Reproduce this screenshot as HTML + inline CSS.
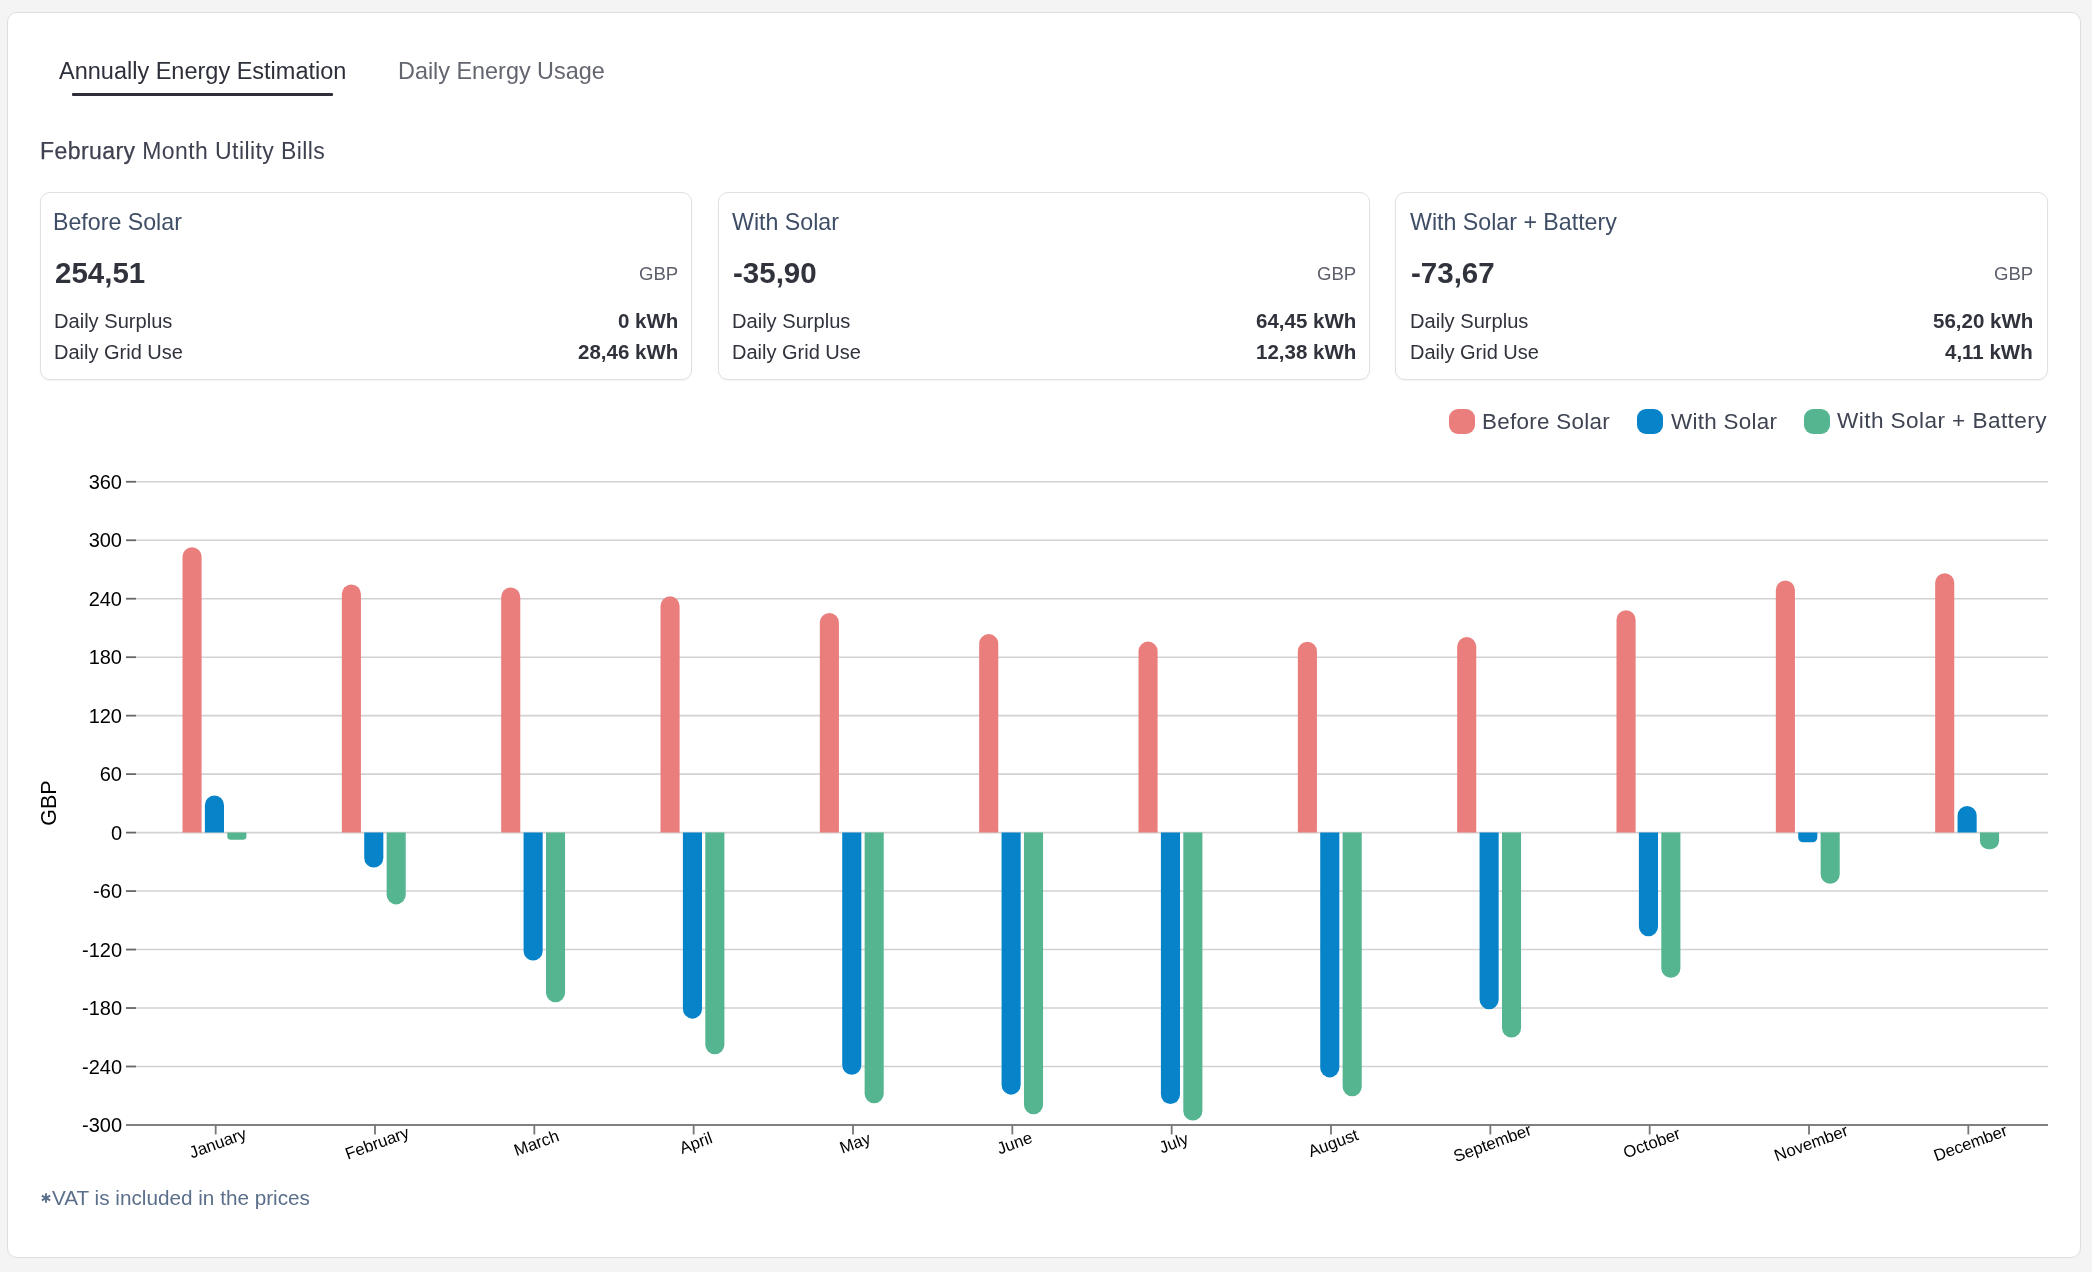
<!DOCTYPE html>
<html><head><meta charset="utf-8"><title>Energy Estimation</title>
<style>
html,body{margin:0;padding:0;}
body{width:2092px;height:1272px;overflow:hidden;background:#f4f4f4;font-family:"Liberation Sans",sans-serif;position:relative;}
.panel{position:absolute;left:7px;top:12px;width:2074px;height:1246px;box-sizing:border-box;border:1px solid #dcdee2;border-radius:10px;background:#fff;}
.t{position:absolute;white-space:nowrap;line-height:1;will-change:transform;}
.card{position:absolute;top:192px;width:652px;height:188px;box-sizing:border-box;border:1px solid #e0e1e4;border-radius:10px;background:#fff;box-shadow:0 1px 2px rgba(16,24,40,0.06);}
svg{position:absolute;left:0;top:0;will-change:transform;}
svg text{font-family:"Liberation Sans",sans-serif;}
</style></head><body>
<div class="panel"></div>
<div class="t" style="left:59.00px;top:59.81px;font-size:23.5px;color:#2d2f3a;">Annually Energy Estimation</div>
<div style="position:absolute;left:72px;top:93px;width:261px;height:3px;background:#2d2e3a;border-radius:1px"></div>
<div class="t" style="left:397.50px;top:59.89px;font-size:23.4px;color:#63656f;">Daily Energy Usage</div>
<div class="t" style="left:39.50px;top:139.53px;font-size:23px;color:#3e4250;letter-spacing:0.42px;"><span style="-webkit-text-stroke:0.25px #3e4250">February</span> Month Utility Bills</div>
<div class="card" style="left:40px;width:652px"></div>
<div class="t" style="left:53.00px;top:210.56px;font-size:23.2px;color:#3f4e66;">Before Solar</div>
<div class="t" style="left:54.50px;top:258.33px;font-size:29.5px;color:#30323c;font-weight:700;">254,51</div>
<div class="t" style="right:1413.80px;top:265.06px;font-size:18.6px;color:#5d606b;">GBP</div>
<div class="t" style="left:53.50px;top:311.29px;font-size:20.1px;color:#30323c;">Daily Surplus</div>
<div class="t" style="right:1414.00px;top:310.95px;font-size:20.5px;color:#30323c;font-weight:700;">0 kWh</div>
<div class="t" style="left:53.50px;top:342.27px;font-size:20px;color:#30323c;">Daily Grid Use</div>
<div class="t" style="right:1414.00px;top:341.85px;font-size:20.5px;color:#30323c;font-weight:700;">28,46 kWh</div>
<div class="card" style="left:718px;width:652px"></div>
<div class="t" style="left:731.80px;top:210.56px;font-size:23.2px;color:#3f4e66;">With Solar</div>
<div class="t" style="left:732.98px;top:258.33px;font-size:29.5px;color:#30323c;font-weight:700;">-35,90</div>
<div class="t" style="right:735.80px;top:265.06px;font-size:18.6px;color:#5d606b;">GBP</div>
<div class="t" style="left:731.98px;top:311.29px;font-size:20.1px;color:#30323c;">Daily Surplus</div>
<div class="t" style="right:736.00px;top:310.95px;font-size:20.5px;color:#30323c;font-weight:700;">64,45 kWh</div>
<div class="t" style="left:731.98px;top:342.27px;font-size:20px;color:#30323c;">Daily Grid Use</div>
<div class="t" style="right:736.00px;top:341.85px;font-size:20.5px;color:#30323c;font-weight:700;">12,38 kWh</div>
<div class="card" style="left:1395px;width:653px"></div>
<div class="t" style="left:1409.80px;top:210.56px;font-size:23.2px;color:#3f4e66;">With Solar + Battery</div>
<div class="t" style="left:1410.58px;top:258.33px;font-size:29.5px;color:#30323c;font-weight:700;">-73,67</div>
<div class="t" style="right:58.80px;top:265.06px;font-size:18.6px;color:#5d606b;">GBP</div>
<div class="t" style="left:1409.58px;top:311.29px;font-size:20.1px;color:#30323c;">Daily Surplus</div>
<div class="t" style="right:59.00px;top:310.95px;font-size:20.5px;color:#30323c;font-weight:700;">56,20 kWh</div>
<div class="t" style="left:1409.58px;top:342.27px;font-size:20px;color:#30323c;">Daily Grid Use</div>
<div class="t" style="right:59.00px;top:341.85px;font-size:20.5px;color:#30323c;font-weight:700;">4,11 kWh</div>
<div style="position:absolute;left:1449px;top:409px;width:26px;height:25px;border-radius:9px;background:#e97e7d"></div>
<div class="t" style="left:1482.00px;top:410.64px;font-size:22.4px;color:#3f4452;letter-spacing:0.3px;">Before Solar</div>
<div style="position:absolute;left:1637px;top:409px;width:26px;height:25px;border-radius:9px;background:#0683c9"></div>
<div class="t" style="left:1671.00px;top:410.64px;font-size:22.4px;color:#3f4452;letter-spacing:0.3px;">With Solar</div>
<div style="position:absolute;left:1804px;top:409px;width:26px;height:25px;border-radius:9px;background:#55b590"></div>
<div class="t" style="left:1836.50px;top:410.47px;font-size:22.6px;color:#3f4452;letter-spacing:0.42px;">With Solar + Battery</div>
<div class="t" style="left:51.50px;top:1187.65px;font-size:20.73px;color:#5b6f8b;">VAT is included in the prices</div>
<svg style="position:absolute;left:40px;top:1192px" width="12" height="12" viewBox="0 0 12 12"><g stroke="#5b6f8b" stroke-width="1.9" stroke-linecap="butt"><line x1="6" y1="1.2" x2="6" y2="10.8"/><line x1="1.85" y1="3.6" x2="10.15" y2="8.4"/><line x1="1.85" y1="8.4" x2="10.15" y2="3.6"/></g></svg>

<svg width="2092" height="1272" viewBox="0 0 2092 1272">
<line x1="136" x2="2048" y1="481.76" y2="481.76" stroke="#d2d2d2" stroke-width="1.6"/>
<line x1="136" x2="2048" y1="540.24" y2="540.24" stroke="#d2d2d2" stroke-width="1.6"/>
<line x1="136" x2="2048" y1="598.71" y2="598.71" stroke="#d2d2d2" stroke-width="1.6"/>
<line x1="136" x2="2048" y1="657.18" y2="657.18" stroke="#d2d2d2" stroke-width="1.6"/>
<line x1="136" x2="2048" y1="715.65" y2="715.65" stroke="#d2d2d2" stroke-width="1.6"/>
<line x1="136" x2="2048" y1="774.13" y2="774.13" stroke="#d2d2d2" stroke-width="1.6"/>
<line x1="136" x2="2048" y1="832.60" y2="832.60" stroke="#d2d2d2" stroke-width="1.6"/>
<line x1="136" x2="2048" y1="891.07" y2="891.07" stroke="#d2d2d2" stroke-width="1.6"/>
<line x1="136" x2="2048" y1="949.55" y2="949.55" stroke="#d2d2d2" stroke-width="1.6"/>
<line x1="136" x2="2048" y1="1008.02" y2="1008.02" stroke="#d2d2d2" stroke-width="1.6"/>
<line x1="136" x2="2048" y1="1066.49" y2="1066.49" stroke="#d2d2d2" stroke-width="1.6"/>
<line x1="126" x2="136" y1="481.76" y2="481.76" stroke="#666" stroke-width="1.8"/>
<text x="122" y="488.96" text-anchor="end" font-size="20" fill="#000">360</text>
<line x1="126" x2="136" y1="540.24" y2="540.24" stroke="#666" stroke-width="1.8"/>
<text x="122" y="547.44" text-anchor="end" font-size="20" fill="#000">300</text>
<line x1="126" x2="136" y1="598.71" y2="598.71" stroke="#666" stroke-width="1.8"/>
<text x="122" y="605.91" text-anchor="end" font-size="20" fill="#000">240</text>
<line x1="126" x2="136" y1="657.18" y2="657.18" stroke="#666" stroke-width="1.8"/>
<text x="122" y="664.38" text-anchor="end" font-size="20" fill="#000">180</text>
<line x1="126" x2="136" y1="715.65" y2="715.65" stroke="#666" stroke-width="1.8"/>
<text x="122" y="722.85" text-anchor="end" font-size="20" fill="#000">120</text>
<line x1="126" x2="136" y1="774.13" y2="774.13" stroke="#666" stroke-width="1.8"/>
<text x="122" y="781.33" text-anchor="end" font-size="20" fill="#000">60</text>
<line x1="126" x2="136" y1="832.60" y2="832.60" stroke="#666" stroke-width="1.8"/>
<text x="122" y="839.80" text-anchor="end" font-size="20" fill="#000">0</text>
<line x1="126" x2="136" y1="891.07" y2="891.07" stroke="#666" stroke-width="1.8"/>
<text x="122" y="898.27" text-anchor="end" font-size="20" fill="#000">-60</text>
<line x1="126" x2="136" y1="949.55" y2="949.55" stroke="#666" stroke-width="1.8"/>
<text x="122" y="956.75" text-anchor="end" font-size="20" fill="#000">-120</text>
<line x1="126" x2="136" y1="1008.02" y2="1008.02" stroke="#666" stroke-width="1.8"/>
<text x="122" y="1015.22" text-anchor="end" font-size="20" fill="#000">-180</text>
<line x1="126" x2="136" y1="1066.49" y2="1066.49" stroke="#666" stroke-width="1.8"/>
<text x="122" y="1073.69" text-anchor="end" font-size="20" fill="#000">-240</text>
<line x1="126" x2="136" y1="1124.97" y2="1124.97" stroke="#666" stroke-width="1.8"/>
<text x="122" y="1132.17" text-anchor="end" font-size="20" fill="#000">-300</text>
<line x1="126" x2="2048" y1="1124.97" y2="1124.97" stroke="#808080" stroke-width="2"/>
<line x1="215.67" x2="215.67" y1="1124.97" y2="1134.47" stroke="#777" stroke-width="1.8"/>
<text x="215.67" y="1137.17" dy="0.71em" text-anchor="middle" font-size="16.7" fill="#000" transform="rotate(-20 215.67 1137.17)">January</text>
<path d="M182.50,832.60 L182.50,556.70 A9.55,9.55 0 0 1 192.05,547.15 L192.05,547.15 A9.55,9.55 0 0 1 201.60,556.70 L201.60,832.60 Z" fill="#e97e7d"/>
<path d="M204.90,832.60 L204.90,805.02 A9.55,9.55 0 0 1 214.45,795.47 L214.45,795.47 A9.55,9.55 0 0 1 224.00,805.02 L224.00,832.60 Z" fill="#0683c9"/>
<path d="M227.30,832.60 L227.30,836.16 A3.56,3.56 0 0 0 230.86,839.71 L242.84,839.71 A3.56,3.56 0 0 0 246.40,836.16 L246.40,832.60 Z" fill="#55b590"/>
<line x1="375.00" x2="375.00" y1="1124.97" y2="1134.47" stroke="#777" stroke-width="1.8"/>
<text x="375.00" y="1137.17" dy="0.71em" text-anchor="middle" font-size="16.7" fill="#000" transform="rotate(-20 375.00 1137.17)">February</text>
<path d="M341.83,832.60 L341.83,594.12 A9.55,9.55 0 0 1 351.38,584.57 L351.38,584.57 A9.55,9.55 0 0 1 360.93,594.12 L360.93,832.60 Z" fill="#e97e7d"/>
<path d="M364.23,832.60 L364.23,858.04 A9.55,9.55 0 0 0 373.78,867.59 L373.78,867.59 A9.55,9.55 0 0 0 383.33,858.04 L383.33,832.60 Z" fill="#0683c9"/>
<path d="M386.63,832.60 L386.63,894.85 A9.55,9.55 0 0 0 396.18,904.40 L396.18,904.40 A9.55,9.55 0 0 0 405.73,894.85 L405.73,832.60 Z" fill="#55b590"/>
<line x1="534.33" x2="534.33" y1="1124.97" y2="1134.47" stroke="#777" stroke-width="1.8"/>
<text x="534.33" y="1137.17" dy="0.71em" text-anchor="middle" font-size="16.7" fill="#000" transform="rotate(-20 534.33 1137.17)">March</text>
<path d="M501.17,832.60 L501.17,597.05 A9.55,9.55 0 0 1 510.72,587.50 L510.72,587.50 A9.55,9.55 0 0 1 520.27,597.05 L520.27,832.60 Z" fill="#e97e7d"/>
<path d="M523.57,832.60 L523.57,950.91 A9.55,9.55 0 0 0 533.12,960.46 L533.12,960.46 A9.55,9.55 0 0 0 542.67,950.91 L542.67,832.60 Z" fill="#0683c9"/>
<path d="M545.97,832.60 L545.97,992.82 A9.55,9.55 0 0 0 555.52,1002.37 L555.52,1002.37 A9.55,9.55 0 0 0 565.07,992.82 L565.07,832.60 Z" fill="#55b590"/>
<line x1="693.67" x2="693.67" y1="1124.97" y2="1134.47" stroke="#777" stroke-width="1.8"/>
<text x="693.67" y="1137.17" dy="0.71em" text-anchor="middle" font-size="16.7" fill="#000" transform="rotate(-20 693.67 1137.17)">April</text>
<path d="M660.50,832.60 L660.50,605.92 A9.55,9.55 0 0 1 670.05,596.37 L670.05,596.37 A9.55,9.55 0 0 1 679.60,605.92 L679.60,832.60 Z" fill="#e97e7d"/>
<path d="M682.90,832.60 L682.90,1009.09 A9.55,9.55 0 0 0 692.45,1018.64 L692.45,1018.64 A9.55,9.55 0 0 0 702.00,1009.09 L702.00,832.60 Z" fill="#0683c9"/>
<path d="M705.30,832.60 L705.30,1044.66 A9.55,9.55 0 0 0 714.85,1054.21 L714.85,1054.21 A9.55,9.55 0 0 0 724.40,1044.66 L724.40,832.60 Z" fill="#55b590"/>
<line x1="853.00" x2="853.00" y1="1124.97" y2="1134.47" stroke="#777" stroke-width="1.8"/>
<text x="853.00" y="1137.17" dy="0.71em" text-anchor="middle" font-size="16.7" fill="#000" transform="rotate(-20 853.00 1137.17)">May</text>
<path d="M819.83,832.60 L819.83,622.49 A9.55,9.55 0 0 1 829.38,612.94 L829.38,612.94 A9.55,9.55 0 0 1 838.93,622.49 L838.93,832.60 Z" fill="#e97e7d"/>
<path d="M842.23,832.60 L842.23,1065.23 A9.55,9.55 0 0 0 851.78,1074.78 L851.78,1074.78 A9.55,9.55 0 0 0 861.33,1065.23 L861.33,832.60 Z" fill="#0683c9"/>
<path d="M864.63,832.60 L864.63,1093.68 A9.55,9.55 0 0 0 874.18,1103.23 L874.18,1103.23 A9.55,9.55 0 0 0 883.73,1093.68 L883.73,832.60 Z" fill="#55b590"/>
<line x1="1012.33" x2="1012.33" y1="1124.97" y2="1134.47" stroke="#777" stroke-width="1.8"/>
<text x="1012.33" y="1137.17" dy="0.71em" text-anchor="middle" font-size="16.7" fill="#000" transform="rotate(-20 1012.33 1137.17)">June</text>
<path d="M979.17,832.60 L979.17,643.63 A9.55,9.55 0 0 1 988.72,634.08 L988.72,634.08 A9.55,9.55 0 0 1 998.27,643.63 L998.27,832.60 Z" fill="#e97e7d"/>
<path d="M1001.57,832.60 L1001.57,1085.11 A9.55,9.55 0 0 0 1011.12,1094.66 L1011.12,1094.66 A9.55,9.55 0 0 0 1020.67,1085.11 L1020.67,832.60 Z" fill="#0683c9"/>
<path d="M1023.97,832.60 L1023.97,1104.79 A9.55,9.55 0 0 0 1033.52,1114.34 L1033.52,1114.34 A9.55,9.55 0 0 0 1043.07,1104.79 L1043.07,832.60 Z" fill="#55b590"/>
<line x1="1171.67" x2="1171.67" y1="1124.97" y2="1134.47" stroke="#777" stroke-width="1.8"/>
<text x="1171.67" y="1137.17" dy="0.71em" text-anchor="middle" font-size="16.7" fill="#000" transform="rotate(-20 1171.67 1137.17)">July</text>
<path d="M1138.50,832.60 L1138.50,651.14 A9.55,9.55 0 0 1 1148.05,641.59 L1148.05,641.59 A9.55,9.55 0 0 1 1157.60,651.14 L1157.60,832.60 Z" fill="#e97e7d"/>
<path d="M1160.90,832.60 L1160.90,1094.46 A9.55,9.55 0 0 0 1170.45,1104.01 L1170.45,1104.01 A9.55,9.55 0 0 0 1180.00,1094.46 L1180.00,832.60 Z" fill="#0683c9"/>
<path d="M1183.30,832.60 L1183.30,1110.93 A9.55,9.55 0 0 0 1192.85,1120.48 L1192.85,1120.48 A9.55,9.55 0 0 0 1202.40,1110.93 L1202.40,832.60 Z" fill="#55b590"/>
<line x1="1331.00" x2="1331.00" y1="1124.97" y2="1134.47" stroke="#777" stroke-width="1.8"/>
<text x="1331.00" y="1137.17" dy="0.71em" text-anchor="middle" font-size="16.7" fill="#000" transform="rotate(-20 1331.00 1137.17)">August</text>
<path d="M1297.83,832.60 L1297.83,651.24 A9.55,9.55 0 0 1 1307.38,641.69 L1307.38,641.69 A9.55,9.55 0 0 1 1316.93,651.24 L1316.93,832.60 Z" fill="#e97e7d"/>
<path d="M1320.23,832.60 L1320.23,1067.86 A9.55,9.55 0 0 0 1329.78,1077.41 L1329.78,1077.41 A9.55,9.55 0 0 0 1339.33,1067.86 L1339.33,832.60 Z" fill="#0683c9"/>
<path d="M1342.63,832.60 L1342.63,1086.76 A9.55,9.55 0 0 0 1352.18,1096.31 L1352.18,1096.31 A9.55,9.55 0 0 0 1361.73,1086.76 L1361.73,832.60 Z" fill="#55b590"/>
<line x1="1490.33" x2="1490.33" y1="1124.97" y2="1134.47" stroke="#777" stroke-width="1.8"/>
<text x="1490.33" y="1137.17" dy="0.71em" text-anchor="middle" font-size="16.7" fill="#000" transform="rotate(-20 1490.33 1137.17)">September</text>
<path d="M1457.17,832.60 L1457.17,646.66 A9.55,9.55 0 0 1 1466.72,637.11 L1466.72,637.11 A9.55,9.55 0 0 1 1476.27,646.66 L1476.27,832.60 Z" fill="#e97e7d"/>
<path d="M1479.57,832.60 L1479.57,999.74 A9.55,9.55 0 0 0 1489.12,1009.29 L1489.12,1009.29 A9.55,9.55 0 0 0 1498.67,999.74 L1498.67,832.60 Z" fill="#0683c9"/>
<path d="M1501.97,832.60 L1501.97,1027.90 A9.55,9.55 0 0 0 1511.52,1037.45 L1511.52,1037.45 A9.55,9.55 0 0 0 1521.07,1027.90 L1521.07,832.60 Z" fill="#55b590"/>
<line x1="1649.67" x2="1649.67" y1="1124.97" y2="1134.47" stroke="#777" stroke-width="1.8"/>
<text x="1649.67" y="1137.17" dy="0.71em" text-anchor="middle" font-size="16.7" fill="#000" transform="rotate(-20 1649.67 1137.17)">October</text>
<path d="M1616.50,832.60 L1616.50,619.76 A9.55,9.55 0 0 1 1626.05,610.21 L1626.05,610.21 A9.55,9.55 0 0 1 1635.60,619.76 L1635.60,832.60 Z" fill="#e97e7d"/>
<path d="M1638.90,832.60 L1638.90,926.74 A9.55,9.55 0 0 0 1648.45,936.29 L1648.45,936.29 A9.55,9.55 0 0 0 1658.00,926.74 L1658.00,832.60 Z" fill="#0683c9"/>
<path d="M1661.30,832.60 L1661.30,968.26 A9.55,9.55 0 0 0 1670.85,977.81 L1670.85,977.81 A9.55,9.55 0 0 0 1680.40,968.26 L1680.40,832.60 Z" fill="#55b590"/>
<line x1="1809.00" x2="1809.00" y1="1124.97" y2="1134.47" stroke="#777" stroke-width="1.8"/>
<text x="1809.00" y="1137.17" dy="0.71em" text-anchor="middle" font-size="16.7" fill="#000" transform="rotate(-20 1809.00 1137.17)">November</text>
<path d="M1775.83,832.60 L1775.83,589.94 A9.55,9.55 0 0 1 1785.38,580.39 L1785.38,580.39 A9.55,9.55 0 0 1 1794.93,589.94 L1794.93,832.60 Z" fill="#e97e7d"/>
<path d="M1798.23,832.60 L1798.23,837.47 A4.87,4.87 0 0 0 1803.11,842.35 L1812.46,842.35 A4.87,4.87 0 0 0 1817.33,837.47 L1817.33,832.60 Z" fill="#0683c9"/>
<path d="M1820.63,832.60 L1820.63,874.21 A9.55,9.55 0 0 0 1830.18,883.76 L1830.18,883.76 A9.55,9.55 0 0 0 1839.73,874.21 L1839.73,832.60 Z" fill="#55b590"/>
<line x1="1968.33" x2="1968.33" y1="1124.97" y2="1134.47" stroke="#777" stroke-width="1.8"/>
<text x="1968.33" y="1137.17" dy="0.71em" text-anchor="middle" font-size="16.7" fill="#000" transform="rotate(-20 1968.33 1137.17)">December</text>
<path d="M1935.17,832.60 L1935.17,582.82 A9.55,9.55 0 0 1 1944.72,573.27 L1944.72,573.27 A9.55,9.55 0 0 1 1954.27,582.82 L1954.27,832.60 Z" fill="#e97e7d"/>
<path d="M1957.57,832.60 L1957.57,815.54 A9.55,9.55 0 0 1 1967.12,805.99 L1967.12,805.99 A9.55,9.55 0 0 1 1976.67,815.54 L1976.67,832.60 Z" fill="#0683c9"/>
<path d="M1979.97,832.60 L1979.97,840.88 A8.28,8.28 0 0 0 1988.25,849.17 L1990.78,849.17 A8.28,8.28 0 0 0 1999.07,840.88 L1999.07,832.60 Z" fill="#55b590"/>
<text x="0" y="0" text-anchor="middle" font-size="21.5" fill="#000" transform="translate(56 803) rotate(-90)">GBP</text>
</svg>
</body></html>
